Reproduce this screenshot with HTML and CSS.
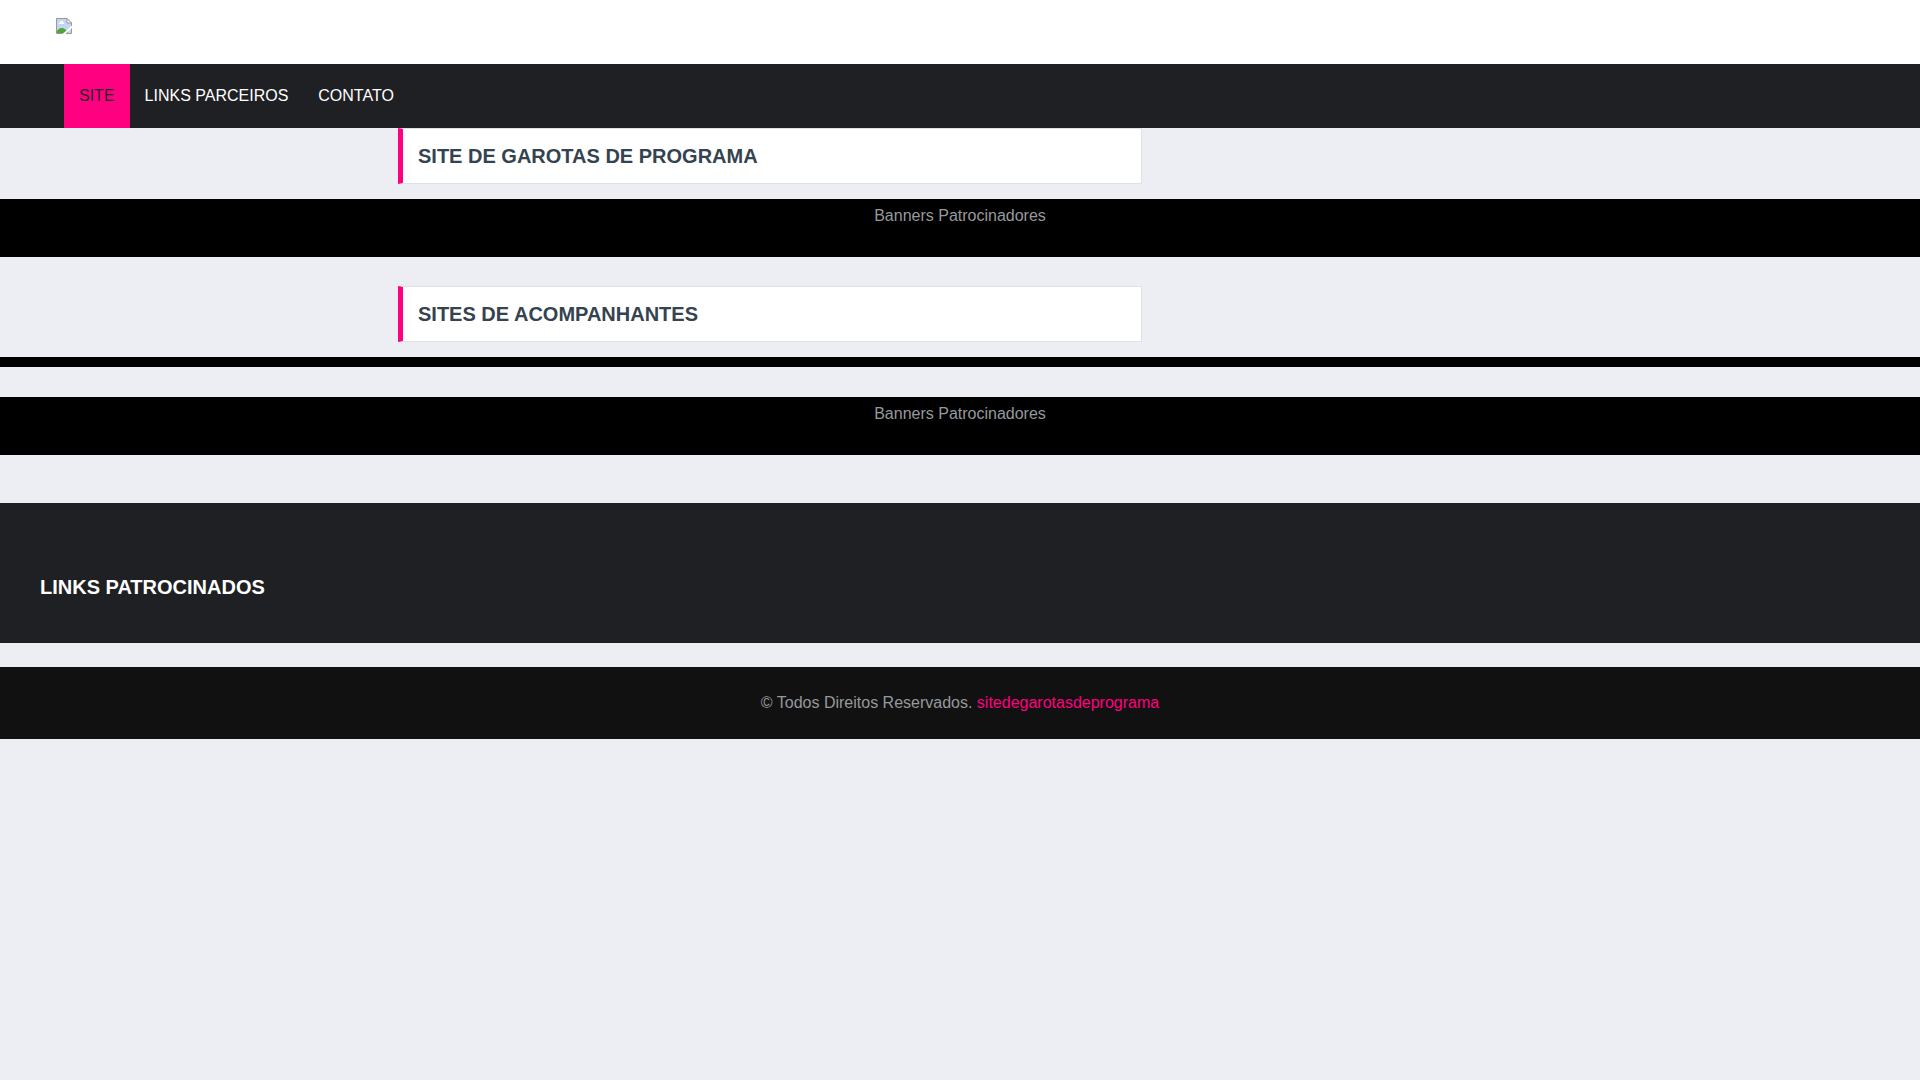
FILE: index.html
```html
<!DOCTYPE html>
<html lang="pt-BR">
<head>
    <meta charset="UTF-8">
    <meta name="viewport" content="width=device-width, initial-scale=1.0">
    <title>Site de Garotas de Programa</title>
    <link rel="stylesheet" href="styles.css">
</head>
<body>
    <header class="topo">
        <a href="#" class="logo">
            <svg width="16" height="16" viewBox="0 0 16 16">
                <path d="M0.5 0.5H11L15.5 5V15.5H0.5Z" fill="#c3d5f6"/>
                <path d="M2.5 6C2.5 4.8 3.5 4.5 4 4.5C4.5 2.5 7 2.5 7.3 4.5C8.5 4.5 8.5 6 8 6Z" fill="#fff"/>
                <path d="M1 15V13C3 9.5 7 9 9.5 11.5L12 15Z" fill="#4ea72e"/>
                <path d="M0.5 15.5V0.5H11L15.5 5V15.5Z" fill="none" stroke="#999"/>
                <path d="M11 0.5V5H15.5Z" fill="#fff" stroke="#999"/>
                <path d="M6.5 16L16 7.5V10L9.5 16Z" fill="#fff"/>
            </svg>
        </a>
    </header>

    <nav class="menu">
        <ul>
            <li><a href="#" class="ativo">SITE</a></li>
            <li><a href="#">LINKS PARCEIROS</a></li>
            <li><a href="#">CONTATO</a></li>
        </ul>
    </nav>

    <main>
        <h1 class="titulo">SITE DE GAROTAS DE PROGRAMA</h1>
        <div class="faixa banners">
            <p>Banners Patrocinadores</p>
        </div>

        <h2 class="titulo">SITES DE ACOMPANHANTES</h2>
        <div class="faixa"></div>

        <div class="faixa banners">
            <p>Banners Patrocinadores</p>
        </div>
    </main>

    <section class="links">
        <h3>LINKS PATROCINADOS</h3>
    </section>

    <footer class="rodape">
        <p>© Todos Direitos Reservados. <a href="#">sitedegarotasdeprograma</a></p>
    </footer>
</body>
</html>
```

FILE: styles.css
```css
* {
    box-sizing: border-box;
    margin: 0;
    padding: 0;
}

body {
    font-family: "Liberation Sans", Arial, sans-serif;
    font-size: 16px;
    line-height: 24px;
    color: #96999c;
    background: #edeef3;
}

a {
    color: #ff0080;
    text-decoration: none;
}

.topo {
    height: 64px;
    padding: 18px 56px;
    background: #fff;
}

.logo,
.logo svg {
    display: block;
    width: 16px;
}

.menu {
    padding: 0 64px;
    background: #1f2024;
}

.menu ul {
    display: flex;
    list-style: none;
}

.menu a {
    display: block;
    padding: 20px 15px;
    color: #fff;
}

.menu a.ativo {
    color: #1f2024;
    background: #ff0080;
}

.titulo {
    max-width: 744px;
    margin: 0 0 15px 398px;
    padding: 15px;
    font-size: 20px;
    color: #34434f;
    background: #fff;
    border: 1px solid #dee2e6;
    border-left: 5px solid #ff0080;
}

.faixa {
    margin-bottom: 30px;
    padding: 5px;
    background: #000;
}

.banners {
    margin-bottom: 29px;
    padding-bottom: 29px;
    text-align: center;
}

.links {
    margin: 48px 0 24px;
    padding: 72px 40px 44px;
    background: #1f2024;
}

.links h3 {
    font-size: 20px;
    color: #fff;
}

.rodape {
    padding: 24px;
    text-align: center;
    background: #111;
}
```
